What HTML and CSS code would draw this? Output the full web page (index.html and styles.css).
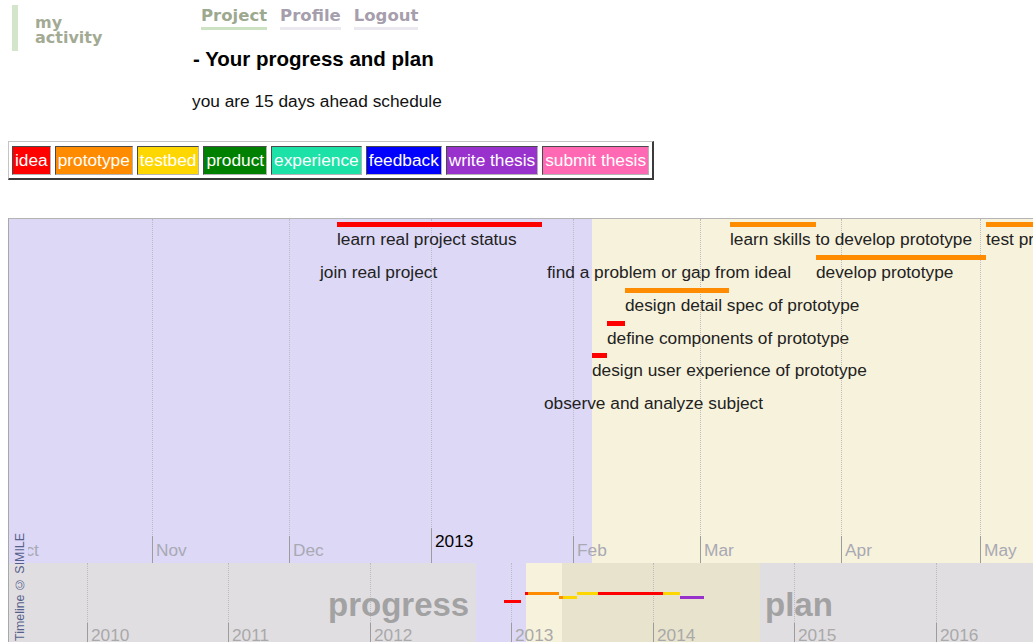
FILE: index.html
```html
<!DOCTYPE html>
<html lang="en">
<head>
<meta charset="utf-8">
<title>my activity - progress and plan</title>
<link rel="stylesheet" href="styles.css">
</head>
<body>
<header class="head">
  <div class="brand">my<br>activity</div>
  <div class="main">
    <nav class="nav">
      <a class="nav-item nav-current" href="#">Project</a>
      <a class="nav-item" href="#">Profile</a>
      <a class="nav-item" href="#">Logout</a>
    </nav>
    <h2 class="title">- Your progress and plan</h2>
    <p class="status">you are 15 days ahead schedule</p>
  </div>
</header>

<ul class="legend">
  <li class="chip c-idea">idea</li>
  <li class="chip c-prototype">prototype</li>
  <li class="chip c-testbed">testbed</li>
  <li class="chip c-product">product</li>
  <li class="chip c-experience">experience</li>
  <li class="chip c-feedback">feedback</li>
  <li class="chip c-write">write thesis</li>
  <li class="chip c-submit">submit thesis</li>
</ul>

<div class="timeline">
  <!-- detail band: months -->
  <div class="band band-detail">
    <div class="shade shade-past" style="left:0;width:583px"></div>

    <div class="grid" style="left:143px"></div>
    <div class="grid" style="left:280px"></div>
    <div class="grid" style="left:422px"></div>
    <div class="grid" style="left:564px"></div>
    <div class="grid" style="left:691px"></div>
    <div class="grid" style="left:832px"></div>
    <div class="grid" style="left:971px"></div>

    <div class="event" style="left:328px;top:3px"><div class="bar c-idea" style="width:205px"></div><div class="label">learn real project status</div></div>
    <div class="event" style="left:721px;top:3px"><div class="bar c-prototype" style="width:86px"></div><div class="label">learn skills to develop prototype</div></div>
    <div class="event" style="left:977px;top:3px"><div class="bar c-prototype" style="width:90px"></div><div class="label">test prototype</div></div>
    <div class="event" style="left:311px;top:36px"><div class="bar"></div><div class="label">join real project</div></div>
    <div class="event" style="left:538px;top:36px"><div class="bar"></div><div class="label">find a problem or gap from ideal</div></div>
    <div class="event" style="left:807px;top:36px"><div class="bar c-prototype" style="width:170px"></div><div class="label">develop prototype</div></div>
    <div class="event" style="left:616px;top:69px"><div class="bar c-prototype" style="width:104px"></div><div class="label">design detail spec of prototype</div></div>
    <div class="event" style="left:598px;top:102px"><div class="bar c-idea" style="width:18px"></div><div class="label">define components of prototype</div></div>
    <div class="event" style="left:583px;top:134px"><div class="bar c-idea" style="width:15px"></div><div class="label">design user experience of prototype</div></div>
    <div class="event" style="left:535px;top:167px"><div class="bar"></div><div class="label">observe and analyze subject</div></div>

    <div class="mark" style="left:-1px">Oct</div>
    <div class="mark" style="left:143px">Nov</div>
    <div class="mark" style="left:280px">Dec</div>
    <div class="mark mark-year" style="left:422px">2013</div>
    <div class="mark" style="left:564px">Feb</div>
    <div class="mark" style="left:691px">Mar</div>
    <div class="mark" style="left:832px">Apr</div>
    <div class="mark" style="left:971px">May</div>
  </div>

  <!-- overview band: years -->
  <div class="band band-overview">
    <div class="shade shade-past" style="left:467px;width:50px"></div>
    <div class="shade shade-plan" style="left:517px;width:36px"></div>
    <div class="shade shade-window" style="left:553px;width:198px"></div>

    <div class="grid grid-short" style="left:78px"></div>
    <div class="grid grid-short" style="left:219px"></div>
    <div class="grid grid-short" style="left:361px"></div>
    <div class="grid grid-short" style="left:502px"></div>
    <div class="grid grid-short" style="left:644px"></div>
    <div class="grid grid-short" style="left:785px"></div>
    <div class="grid grid-short" style="left:927px"></div>

    <div class="phase" style="left:319px">progress</div>
    <div class="phase" style="left:756px">plan</div>

    <div class="dash c-idea" style="left:495px;top:37px;width:17px"></div>
    <div class="dash c-idea" style="left:516px;top:29px;width:3px"></div>
    <div class="dash c-prototype" style="left:519px;top:29px;width:31px"></div>
    <div class="dash c-prototype" style="left:550px;top:33px;width:4px"></div>
    <div class="dash c-testbed" style="left:554px;top:33px;width:14px"></div>
    <div class="dash c-testbed" style="left:568px;top:29px;width:21px"></div>
    <div class="dash c-idea" style="left:589px;top:29px;width:65px"></div>
    <div class="dash c-testbed" style="left:654px;top:29px;width:17px"></div>
    <div class="dash c-write" style="left:671px;top:33px;width:24px"></div>

    <div class="mark mark-low" style="left:78px">2010</div>
    <div class="mark mark-low" style="left:219px">2011</div>
    <div class="mark mark-low" style="left:361px">2012</div>
    <div class="mark mark-low" style="left:502px">2013</div>
    <div class="mark mark-low" style="left:644px">2014</div>
    <div class="mark mark-low" style="left:785px">2015</div>
    <div class="mark mark-low" style="left:927px">2016</div>
  </div>

  <div class="credit">Timeline © SIMILE</div>
</div>
</body>
</html>
```

FILE: styles.css
```css
html, body {
  margin: 0;
  padding: 0;
  overflow: hidden;
  background: #fff;
}

body {
  font-family: "Liberation Sans", Arial, sans-serif;
  color: #000;
  width: 1033px;
  height: 642px;
}

/* ---------- header ---------- */
.head {
  display: flex;
  align-items: flex-start;
}

.brand {
  box-sizing: border-box;
  width: 180px;
  height: 46px;
  margin: 5px 0 0 12px;
  padding: 10px 0 0 17px;
  border-left: 6px solid #d3e6cb;
  font: bold 16px/15px "DejaVu Sans", Verdana, sans-serif;
  color: #a3aa94;
}

.main {
  display: flex;
  flex-direction: column;
}

.nav {
  display: flex;
  gap: 13px;
  margin: 7px 0 0 9px;
}

.nav-item {
  font: bold 16.5px/18px "DejaVu Sans", Verdana, sans-serif;
  color: #a69eac;
  text-decoration: none;
  padding-bottom: 2px;
  border-bottom: 3px solid #ece8f0;
}

.nav-current {
  color: #9da98f;
  border-bottom-color: #cce2c2;
}

.title {
  margin: 17px 0 0 1px;
  font-size: 20.5px;
  line-height: 24px;
  font-weight: bold;
}

.status {
  margin: 20px 0 0;
  font-size: 17.3px;
  line-height: 20px;
  color: #111;
}

/* ---------- legend ---------- */
.legend {
  display: inline-flex;
  gap: 4px;
  list-style: none;
  margin: 30px 0 0 8px;
  padding: 4px 3px 3px 3px;
  border-style: solid;
  border-width: 1px 2px 2px 1px;
  border-color: #c4c4c4 #3a3a3a #3a3a3a #c4c4c4;
}

.chip {
  padding: 0 2px;
  font-size: 17.3px;
  line-height: 27px;
  color: #fff;
  border: 1px solid;
  border-color: #4a4a4a #b4b4b4 #b4b4b4 #4a4a4a;
}

.c-idea { background: #ff0000; }
.c-prototype { background: #ff8c00; }
.c-testbed { background: #ffd700; }
.c-product { background: #008000; }
.c-experience { background: #1de2a8; }
.c-feedback { background: #0000ff; }
.c-write { background: #9932cc; }
.c-submit { background: #ff69b4; }

/* ---------- timeline ---------- */
.timeline {
  position: relative;
  width: 1060px;
  margin: 38px 0 0 8px;
  border-top: 1px solid #b4b4b4;
  border-left: 1px solid #a8a8a8;
}

.band {
  position: relative;
  overflow: hidden;
}

.band-detail {
  height: 344px;
  background: #f7f2dc;
}

.band-overview {
  height: 86px;
  background: #e1dee2;
}

.shade {
  position: absolute;
  top: 0;
  bottom: 0;
}

.shade-past { background: #dcd8f6; }
.shade-plan { background: #f7f2dc; }
.shade-window { background: #e8e3cd; }

.grid {
  position: absolute;
  top: 0;
  bottom: 0;
  border-left: 1px dotted #bdbac6;
}

.grid-short {
  bottom: 26px;
}

/* event = duration bar with its caption underneath */
.event {
  position: absolute;
  white-space: nowrap;
}

.bar {
  height: 5px;
  margin-bottom: 2px;
}

.label {
  font-size: 17.3px;
  line-height: 20px;
  color: #222;
}

.dash {
  position: absolute;
  height: 3px;
}

.phase {
  position: absolute;
  top: 24px;
  font-size: 33px;
  line-height: 36px;
  font-weight: bold;
  color: #a2a2a2;
}

/* axis ticks with their labels */
.mark {
  position: absolute;
  bottom: 0;
  height: 27px;
  box-sizing: border-box;
  padding: 4px 0 0 3px;
  border-left: 1px solid #9c9c9c;
  font-size: 17.3px;
  line-height: 20px;
  color: #a9a9b3;
  white-space: nowrap;
}

.mark-year {
  height: 35px;
  padding-top: 3px;
  color: #000;
}

.mark-low {
  height: 26px;
  padding-top: 2px;
  color: #a9a9a9;
}

.credit {
  position: absolute;
  left: 3px;
  top: 314px;
  writing-mode: vertical-rl;
  transform: rotate(180deg);
  font-size: 12.4px;
  line-height: 16px;
  color: #55608a;
  white-space: nowrap;
  background: linear-gradient(to top, #dcd8f6 0 30px, #e1dee2 30px);
}
```
